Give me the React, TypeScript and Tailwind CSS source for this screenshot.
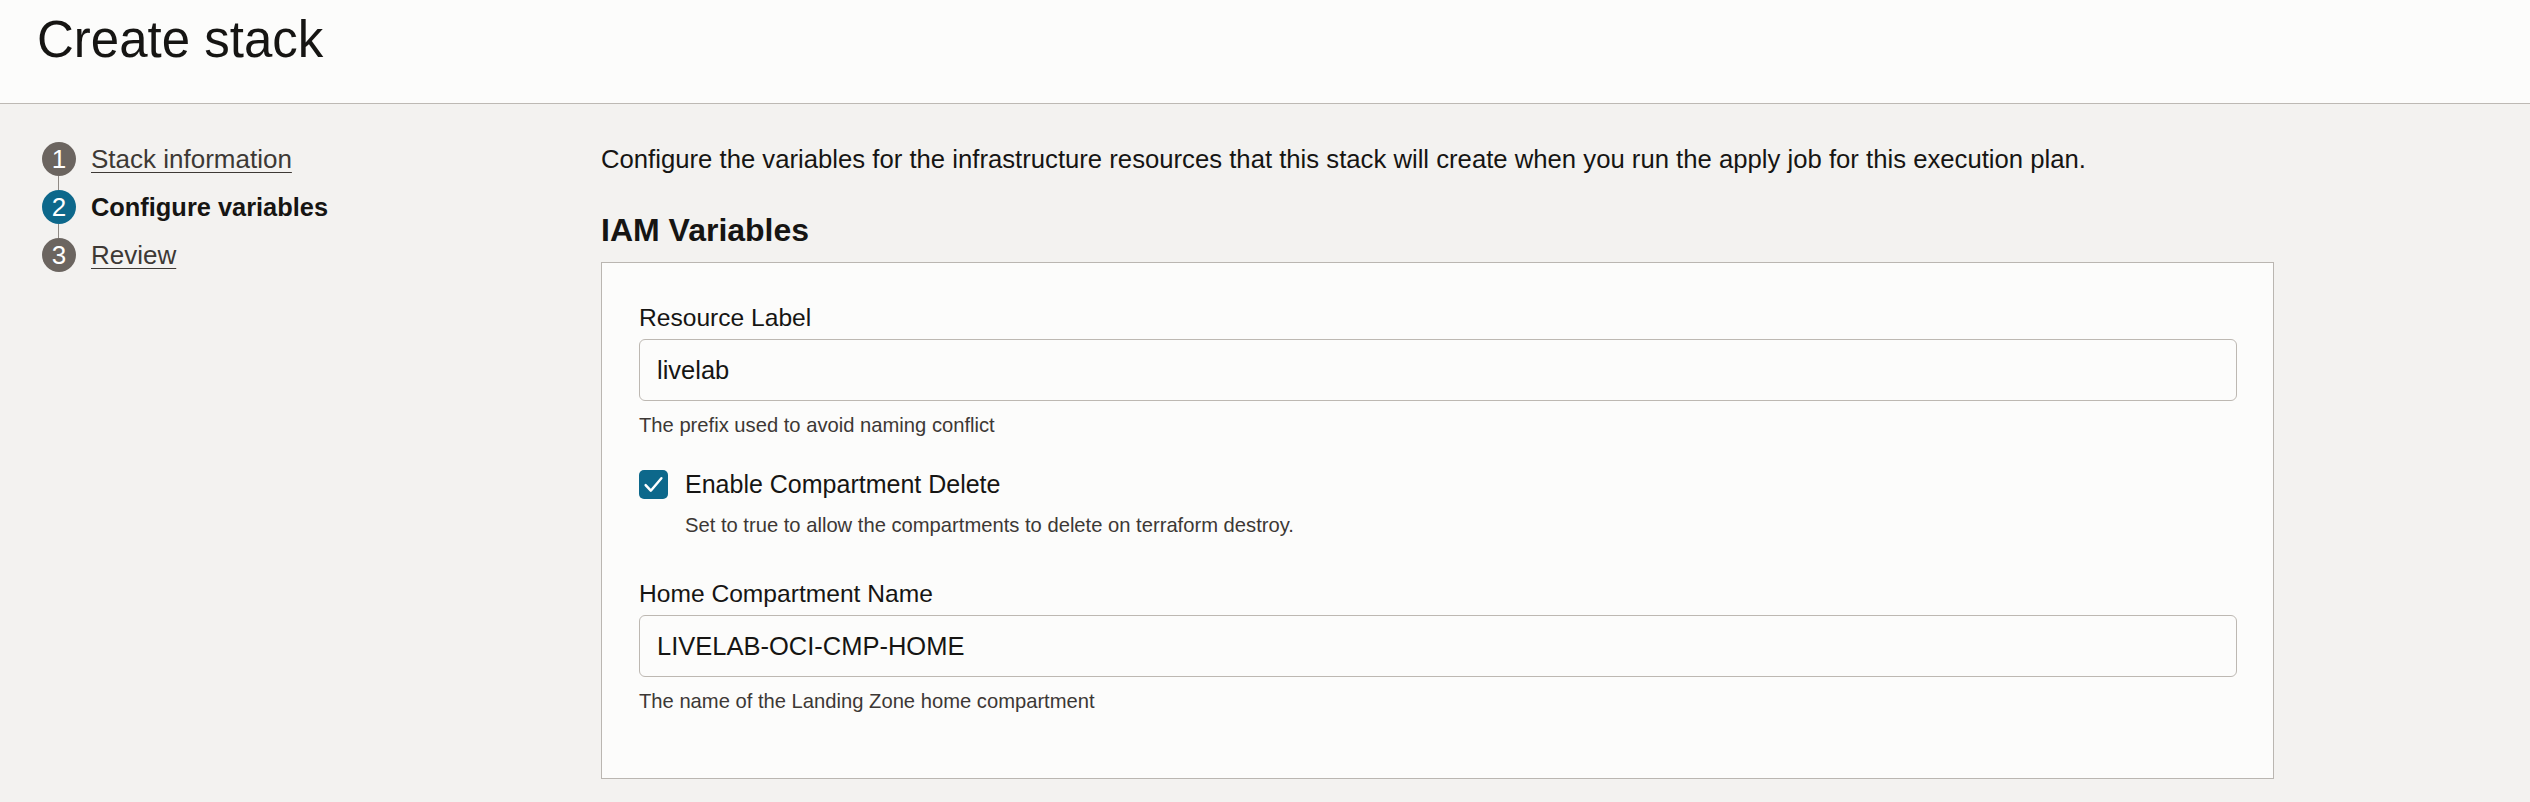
import React from 'react';

type StepProps = {
  n: number;
  label: string;
  active?: boolean;
};

const Step: React.FC<StepProps> = ({ n, label, active }) => (
  <div className="flex items-center h-[34px]">
    <div
      className={`w-[34px] h-[34px] rounded-full flex items-center justify-center text-white text-[26px] leading-none ${
        active ? 'bg-[#0d688b]' : 'bg-[#6b6560]'
      }`}
    >
      {n}
    </div>
    {active ? (
      <span className="ml-[15px] text-[25.4px] leading-[34px] font-bold text-[#161513]">{label}</span>
    ) : (
      <a className="ml-[15px] text-[26px] leading-[34px] text-[#3d3935] underline decoration-1 underline-offset-[4px]">
        {label}
      </a>
    )}
  </div>
);

const Connector = () => <div className="ml-[16px] w-px h-[14px] bg-[#8f8a85]" />;

type FieldProps = {
  label: string;
  value: string;
  help: string;
};

const TextField: React.FC<FieldProps> = ({ label, value, help }) => (
  <div className="flex flex-col">
    <label className="text-[24.6px] leading-[30px] text-[#161513]">{label}</label>
    <div className="mt-[6px] h-[62px] rounded-[6px] border border-[#bdb8b2] bg-[#fcfcfb] flex items-center pl-[17px] text-[25.5px] text-[#161513]">
      {value}
    </div>
    <div className="mt-[12px] text-[20.2px] leading-[24px] text-[#3c3835]">{help}</div>
  </div>
);

export default function App() {
  return (
    <div className="min-h-screen bg-[#f3f2f0] font-['Liberation_Sans',Arial,sans-serif]">
      <header className="h-[104px] bg-[#fcfcfb] border-b border-[#bdb9b4] pl-[37px]">
        <h1 className="text-[51px] leading-[80px] text-[#161513]">Create stack</h1>
      </header>

      <div className="flex">
        <nav className="w-[601px] shrink-0 pl-[42px] pt-[38px]">
          <Step n={1} label="Stack information" />
          <Connector />
          <Step n={2} label="Configure variables" active />
          <Connector />
          <Step n={3} label="Review" />
        </nav>

        <main className="pt-[38px]">
          <p className="text-[25.7px] leading-[34px] text-[#161513]">
            Configure the variables for the infrastructure resources that this stack will create when you run the apply job for this execution plan.
          </p>

          <h2 className="mt-[34px] text-[32px] leading-[40px] font-bold text-[#161513]">IAM Variables</h2>

          <section className="mt-[12px] w-[1673px] bg-[#fcfcfb] border border-[#bab6b1] pl-[37px] pr-[36px] pt-[40px] pb-[65px]">
            <TextField
              label="Resource Label"
              value="livelab"
              help="The prefix used to avoid naming conflict"
            />

            <div className="mt-[32px] flex items-center h-[30px]">
              <div className="w-[29px] h-[29px] rounded-[5px] bg-[#0d688b] flex items-center justify-center">
                <svg width="27" height="27" viewBox="0 0 24 24" fill="none">
                  <path d="M5 12.5l4.6 5L19 6.5" stroke="white" strokeWidth="2.2" strokeLinecap="round" strokeLinejoin="round" />
                </svg>
              </div>
              <span className="ml-[17px] text-[25px] leading-[30px] text-[#161513]">Enable Compartment Delete</span>
            </div>
            <div className="mt-[14px] pl-[46px] text-[20.2px] leading-[24px] text-[#3c3835]">
              Set to true to allow the compartments to delete on terraform destroy.
            </div>

            <div className="mt-[42px]">
              <TextField
                label="Home Compartment Name"
                value="LIVELAB-OCI-CMP-HOME"
                help="The name of the Landing Zone home compartment"
              />
            </div>
          </section>
        </main>
      </div>
    </div>
  );
}
